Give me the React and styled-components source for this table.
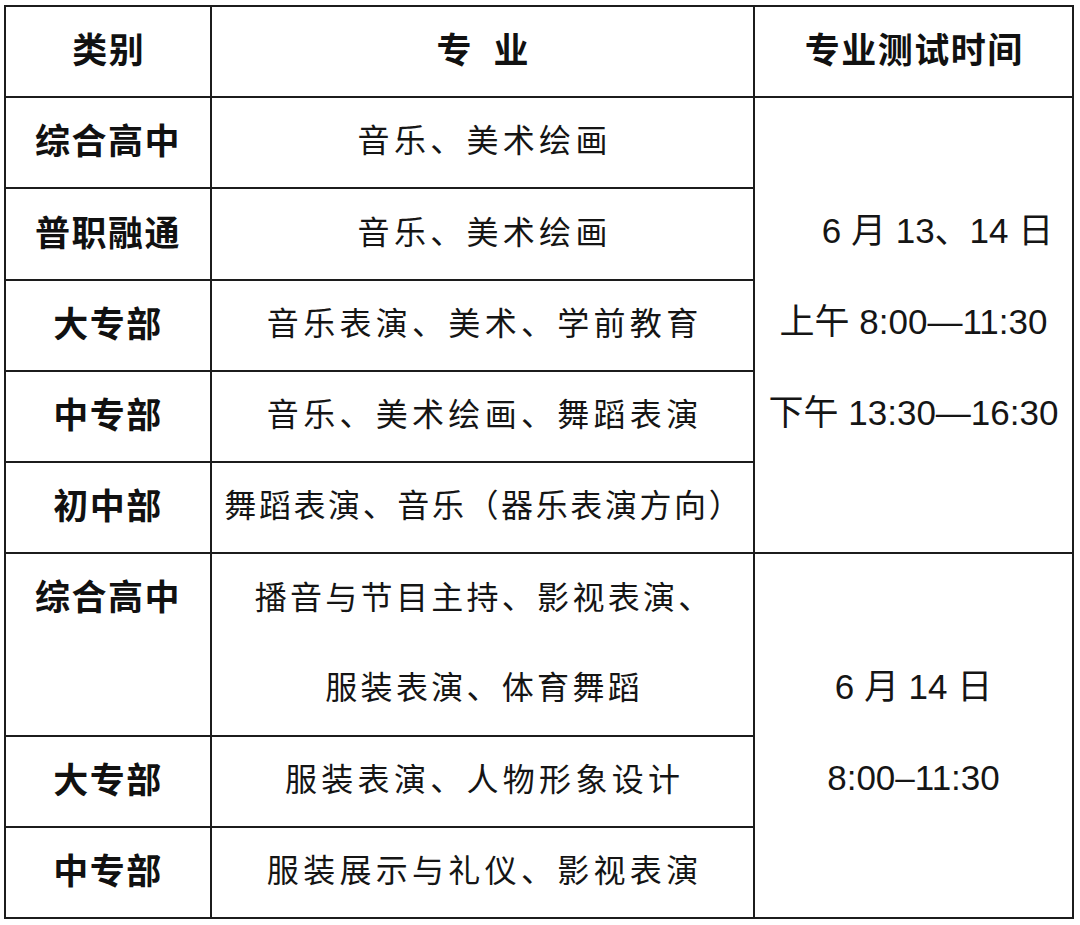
import React from "react";
import styled, { createGlobalStyle } from "styled-components";

const GlobalStyle = createGlobalStyle`
  html, body {
    margin: 0;
    padding: 0;
    background: #ffffff;
  }
  body {
    font-family: "Noto Sans CJK SC", "Liberation Sans", sans-serif;
    color: #111111;
  }
`;

const Page = styled.div`
  padding: 5px 0 0 4px;
`;

const Table = styled.div`
  box-sizing: border-box;
  width: 1070px;
  height: 914px;
  display: grid;
  grid-template-columns: 206px 543px 319px;
  grid-template-rows: repeat(10, 1fr);
  border-left: 2px solid #1c1c1c;
  border-top: 2px solid #1c1c1c;
`;

const Cell = styled.div`
  box-sizing: border-box;
  border-right: 2px solid #1c1c1c;
  border-bottom: 2px solid #1c1c1c;
  grid-row: span ${(p) => p.$span || 1};
  display: flex;
  flex-direction: column;
  align-items: center;
  justify-content: ${(p) => (p.$top ? "flex-start" : "center")};
  padding-bottom: ${(p) => (p.$top ? 0 : 8)}px;
  min-width: 0;
  overflow: hidden;
`;

const HeadText = styled.div`
  font-family: "Noto Sans CJK SC", sans-serif;
  font-weight: 700;
  font-size: 35px;
  line-height: 89px;
  letter-spacing: ${(p) => p.$ls ?? 1.5}px;
  padding-left: ${(p) => p.$ls ?? 1.5}px;
  white-space: nowrap;
  color: #111;
`;

const CategoryText = styled.div`
  font-family: "Noto Sans CJK SC", sans-serif;
  font-weight: 700;
  font-size: 35px;
  line-height: ${(p) => (p.$top ? 81 : 89)}px;
  letter-spacing: 1.5px;
  white-space: nowrap;
  color: #111;
`;

const MajorText = styled.div`
  font-family: "Noto Sans CJK SC", sans-serif;
  font-weight: 400;
  font-size: 32px;
  line-height: ${(p) => p.$lh || 89}px;
  letter-spacing: ${(p) => p.$ls ?? 4.3}px;
  padding-left: ${(p) => p.$ls ?? 4.3}px;
  white-space: nowrap;
  color: #151515;
`;

const TimeText = styled.div`
  font-family: "Liberation Sans", "Noto Sans CJK SC", sans-serif;
  font-weight: 400;
  font-size: 35px;
  line-height: 91px;
  white-space: pre;
  padding-left: ${(p) => p.$indent || 0}px;
  color: #151515;
`;

const rows = [
  { cat: "综合高中", major: ["音乐、美术绘画"] },
  { cat: "普职融通", major: ["音乐、美术绘画"] },
  { cat: "大专部", major: ["音乐表演、美术、学前教育"] },
  { cat: "中专部", major: ["音乐、美术绘画、舞蹈表演"] },
  { cat: "初中部", major: ["舞蹈表演、音乐（器乐表演方向）"], ls: 2.6 },
];

const rows2 = [
  { cat: "综合高中", major: ["播音与节目主持、影视表演、", "服装表演、体育舞蹈"], span: 2, ls: 3.3 },
  { cat: "大专部", major: ["服装表演、人物形象设计"] },
  { cat: "中专部", major: ["服装展示与礼仪、影视表演"] },
];

export default function App() {
  return (
    <>
      <GlobalStyle />
      <Page>
        <Table>
          <Cell>
            <HeadText>类别</HeadText>
          </Cell>
          <Cell>
            <HeadText $ls={22}>专业</HeadText>
          </Cell>
          <Cell>
            <HeadText>专业测试时间</HeadText>
          </Cell>

          {rows.map((r, i) => (
            <React.Fragment key={"a" + i}>
              <Cell>
                <CategoryText>{r.cat}</CategoryText>
              </Cell>
              <Cell>
                {r.major.map((m) => (
                  <MajorText key={m} $ls={r.ls}>
                    {m}
                  </MajorText>
                ))}
              </Cell>
              {i === 0 && (
                <Cell $span={5}>
                  <TimeText $indent={48}>6 月 13、14 日</TimeText>
                  <TimeText>上午 8:00—11:30</TimeText>
                  <TimeText>下午 13:30—16:30</TimeText>
                </Cell>
              )}
            </React.Fragment>
          ))}

          {rows2.map((r, i) => (
            <React.Fragment key={"b" + i}>
              <Cell $span={r.span} $top={!!r.span}>
                <CategoryText $top={!!r.span}>{r.cat}</CategoryText>
              </Cell>
              <Cell $span={r.span}>
                {r.major.map((m) => (
                  <MajorText key={m} $ls={r.ls} $lh={r.span ? 90 : 89}>
                    {m}
                  </MajorText>
                ))}
              </Cell>
              {i === 0 && (
                <Cell $span={4}>
                  <TimeText>6 月 14 日</TimeText>
                  <TimeText>8:00–11:30</TimeText>
                </Cell>
              )}
            </React.Fragment>
          ))}
        </Table>
      </Page>
    </>
  );
}
